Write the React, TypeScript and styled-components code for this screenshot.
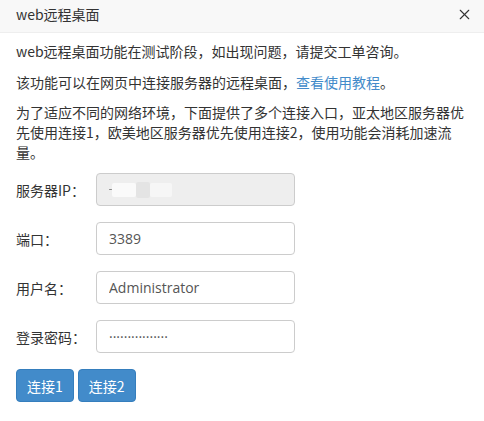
import styled, { createGlobalStyle } from 'styled-components';
import { X } from 'lucide-react';

const GlobalStyle = createGlobalStyle`
    body {
        margin: 0;
        background: #fff;
        font-family: 'Noto Sans CJK SC', 'Open Sans', sans-serif;
        color: #333;
    }
`;

const StyledDialog = styled.div`
    width: 484px;
    background: #fff;
`;

const StyledHeader = styled.div`
    box-sizing: border-box;
    display: flex;
    align-items: center;
    justify-content: space-between;
    height: 33px;
    padding: 0 8px 4px 16px;
    background: #f8f8f8;
    border-bottom: 1px solid #eee;
    font-size: 14px;
    color: #333;
`;

const StyledClose = styled.button`
    display: flex;
    align-items: center;
    justify-content: center;
    width: 24px;
    height: 24px;
    padding: 0;
    border: none;
    background: none;
    color: #333;
    cursor: pointer;
`;

const StyledBody = styled.div`
    padding: 8px 16px 16px;
`;

const StyledText = styled.p`
    margin: 0 0 11px;
    font-size: 14px;
    line-height: 20px;

    &:nth-child(2) {
        margin-bottom: 10px;
    }
`;

const StyledLink = styled.a`
    color: #428bca;
    text-decoration: none;
`;

const StyledForm = styled.div`
    display: flex;
    flex-direction: column;
    gap: 16px;
`;

const StyledRow = styled.div`
    display: flex;
    align-items: center;
`;

const StyledLabel = styled.label`
    width: 80px;
    font-size: 14px;
`;

const StyledInput = styled.input`
    box-sizing: border-box;
    width: 199px;
    height: 33px;
    padding: 0 12px;
    border: 1px solid #ccc;
    border-radius: 4px;
    font-family: 'Open Sans', sans-serif;
    font-size: 14px;
    color: #555;
    outline: none;
`;

const StyledDisabled = styled.div`
    box-sizing: border-box;
    display: flex;
    align-items: center;
    width: 199px;
    height: 33px;
    padding: 0 12px;
    border: 1px solid #ccc;
    border-radius: 4px;
    background: #eee;
`;

const StyledMask = styled.span<{ $w: number; $h: number; $bg: string }>`
    display: block;
    width: ${({ $w }) => $w}px;
    height: ${({ $h }) => $h}px;
    background: ${({ $bg }) => $bg};
    border-radius: 2px;
`;

const StyledButtons = styled.div`
    display: flex;
    gap: 4px;
`;

const StyledButton = styled.button`
    height: 33px;
    padding: 0 10px;
    border: 1px solid #357ebd;
    border-radius: 4px;
    background: #428bca;
    color: #fff;
    font-family: 'Noto Sans CJK SC', 'Open Sans', sans-serif;
    font-size: 14px;
    cursor: pointer;
`;

export default function App() {
    return (
        <>
            <GlobalStyle />
            <StyledDialog>
                <StyledHeader>
                    <span>web远程桌面</span>
                    <StyledClose aria-label="close">
                        <X size={17} strokeWidth={1.6} />
                    </StyledClose>
                </StyledHeader>
                <StyledBody>
                    <StyledText>web远程桌面功能在测试阶段，如出现问题，请提交工单咨询。</StyledText>
                    <StyledText>
                        该功能可以在网页中连接服务器的远程桌面，<StyledLink href="#">查看使用教程</StyledLink>。
                    </StyledText>
                    <StyledText>
                        为了适应不同的网络环境，下面提供了多个连接入口，亚太地区服务器优先使用连接1，欧美地区服务器优先使用连接2，使用功能会消耗加速流量。
                    </StyledText>
                    <StyledForm>
                        <StyledRow>
                            <StyledLabel>服务器IP：</StyledLabel>
                            <StyledDisabled>
                                <StyledMask $w={3} $h={1} $bg="#888" />
                                <StyledMask $w={24} $h={14} $bg="#fafafa" />
                                <StyledMask $w={14} $h={16} $bg="#e4e4e4" />
                                <StyledMask $w={22} $h={14} $bg="#f6f6f6" />
                            </StyledDisabled>
                        </StyledRow>
                        <StyledRow>
                            <StyledLabel>端口：</StyledLabel>
                            <StyledInput defaultValue="3389" />
                        </StyledRow>
                        <StyledRow>
                            <StyledLabel>用户名：</StyledLabel>
                            <StyledInput defaultValue="Administrator" />
                        </StyledRow>
                        <StyledRow>
                            <StyledLabel>登录密码：</StyledLabel>
                            <StyledInput defaultValue="················" />
                        </StyledRow>
                        <StyledButtons>
                            <StyledButton>连接1</StyledButton>
                            <StyledButton>连接2</StyledButton>
                        </StyledButtons>
                    </StyledForm>
                </StyledBody>
            </StyledDialog>
        </>
    );
}
